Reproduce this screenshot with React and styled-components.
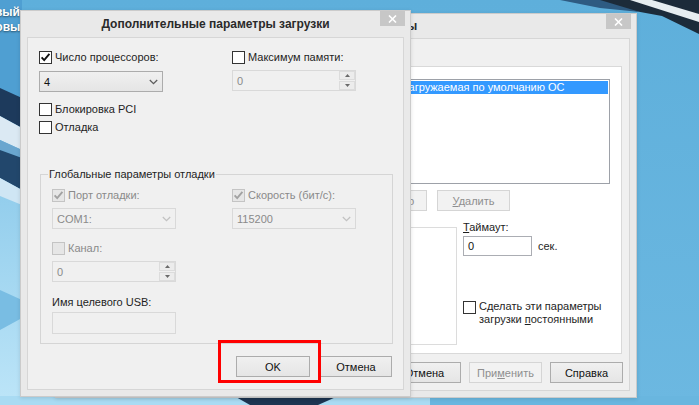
import React from 'react';
import styled, { createGlobalStyle } from 'styled-components';

const Global = createGlobalStyle`
  html, body { margin: 0; padding: 0; background: #69b5de; }
  body { font-family: "Liberation Sans", Arial, sans-serif; }
`;

const Desktop = styled.div`
  position: relative;
  width: 699px;
  height: 405px;
  overflow: hidden;
  font-family: "Liberation Sans", Arial, sans-serif;
  font-size: 11px;
  color: #1e1e1e;
`;

const Wallpaper = styled.svg`
  position: absolute;
  left: 0;
  top: 0;
`;

const IconLabel = styled.div`
  position: absolute;
  right: ${p => p.$right}px;
  top: ${p => p.$top}px;
  color: #fff;
  font-size: 12px;
  font-weight: bold;
  line-height: 15px;
  white-space: nowrap;
  text-shadow: 0 1px 2px rgba(0, 0, 0, 0.5);
`;

const Window = styled.div`
  position: absolute;
  z-index: ${p => p.$z};
  left: ${p => p.$x}px;
  top: ${p => p.$y}px;
  width: ${p => p.$w}px;
  height: ${p => p.$h}px;
  box-sizing: border-box;
  background: #e9e9e9;
  border: 1px solid #cbcbcb;
  box-shadow: 0 1px 4px rgba(0, 0, 0, 0.12);
  display: flex;
  flex-direction: column;
`;

const TitleBar = styled.div`
  height: ${p => p.$h}px;
  display: flex;
  align-items: flex-start;
  flex: none;
`;

const Title = styled.div`
  flex: 1;
  text-align: center;
  padding-left: ${p => p.$pad}px;
  line-height: ${p => p.$h}px;
  font-size: 12px;
  font-weight: bold;
  color: #2a2a2a;
  white-space: nowrap;
  overflow: hidden;
`;

const CloseBtn = styled.div`
  width: 25px;
  height: 15px;
  margin-right: 5px;
  background: #c7c7c7;
  display: flex;
  align-items: center;
  justify-content: center;
  flex: none;
`;

const Client = styled.div`
  position: relative;
  flex: 1;
  margin: 0 6px 6px;
  box-sizing: border-box;
  background: #f0f0f0;
  border: 1px solid #d6d6d6;
  display: flex;
  flex-direction: column;
  padding: ${p => p.$pad};
  & > * { flex-shrink: 0; }
`;

/* ---------- controls ---------- */

const Grid2 = styled.div`
  display: grid;
  grid-template-columns: 124px 124px;
  column-gap: ${p => p.$gap}px;
`;

const Field = styled.div`
  display: flex;
  flex-direction: column;
  gap: ${p => p.$gap}px;
`;

const CheckRow = styled.div`
  display: flex;
  align-items: ${p => (p.$top ? 'flex-start' : 'center')};
  gap: 3px;
  margin-top: ${p => p.$mt || 0}px;
`;

const Box = styled.div`
  width: 13px;
  height: 13px;
  box-sizing: border-box;
  flex: none;
  border: 1px solid ${p => (p.$disabled ? '#c4c4c4' : '#333333')};
  background: ${p => (p.$disabled ? '#e6e6e6' : '#ffffff')};
  display: flex;
  align-items: center;
  justify-content: center;
  margin-top: ${p => p.$mt || 0}px;
`;

const Label = styled.span`
  line-height: 13px;
  color: ${p => (p.$disabled ? '#8a8a8a' : '#1e1e1e')};
  white-space: nowrap;
`;

const Check = ({ checked, disabled, mt }) => (
  <Box $disabled={disabled} $mt={mt}>
    {checked && (
      <svg width="11" height="11" viewBox="0 0 11 11">
        <path
          d="M1.6 5.4 L4.2 8.1 L9.4 1.9"
          fill="none"
          stroke={disabled ? '#a2a2a2' : '#111'}
          strokeWidth="1.9"
        />
      </svg>
    )}
  </Box>
);

const SelectBox = styled.div`
  height: 21px;
  box-sizing: border-box;
  border: 1px solid ${p => (p.$disabled ? '#d9d9d9' : '#acacac')};
  background: ${p => (p.$disabled ? '#f0f0f0' : 'linear-gradient(#f0f0f0, #e5e5e5)')};
  color: ${p => (p.$disabled ? '#8a8a8a' : '#111')};
  display: flex;
  align-items: center;
  justify-content: space-between;
  padding: 0 4px 0 4px;
`;

const Chevron = ({ disabled }) => (
  <svg width="9" height="6" viewBox="0 0 9 6">
    <path d="M0.8 1 L4.5 4.6 L8.2 1" fill="none" stroke={disabled ? '#c2c2c2' : '#5c5c5c'} strokeWidth="1.3" />
  </svg>
);

const Select = ({ value, disabled }) => (
  <SelectBox $disabled={disabled}>
    <span>{value}</span>
    <Chevron disabled={disabled} />
  </SelectBox>
);

const SpinBox = styled.div`
  height: 21px;
  box-sizing: border-box;
  border: 1px solid #d9d9d9;
  background: #f0f0f0;
  display: flex;
`;

const SpinValue = styled.div`
  flex: 1;
  padding-left: 4px;
  display: flex;
  align-items: center;
  color: #8a8a8a;
`;

const SpinButtons = styled.div`
  width: 16px;
  display: flex;
  flex-direction: column;
  gap: 1px;
`;

const SpinArrow = styled.div`
  flex: 1;
  border: 1px solid #dcdcdc;
  background: #ececec;
  display: flex;
  align-items: center;
  justify-content: center;
`;

const Spin = ({ value }) => (
  <SpinBox>
    <SpinValue>{value}</SpinValue>
    <SpinButtons>
      <SpinArrow>
        <svg width="5" height="3" viewBox="0 0 5 3"><path d="M0 3 L2.5 0 L5 3 Z" fill="#6a6a6a" /></svg>
      </SpinArrow>
      <SpinArrow>
        <svg width="5" height="3" viewBox="0 0 5 3"><path d="M0 0 L2.5 3 L5 0 Z" fill="#6a6a6a" /></svg>
      </SpinArrow>
    </SpinButtons>
  </SpinBox>
);

const TextInput = styled.div`
  width: ${p => (p.$w ? `${p.$w}px` : 'auto')};
  height: ${p => p.$h}px;
  box-sizing: border-box;
  border: 1px solid ${p => (p.$disabled ? '#d9d9d9' : '#abadb3')};
  background: ${p => (p.$disabled ? '#f0f0f0' : '#ffffff')};
  display: flex;
  align-items: center;
  padding-left: 4px;
  color: #111;
`;

const Button = styled.div`
  width: ${p => p.$w}px;
  height: 21px;
  box-sizing: border-box;
  flex: none;
  border: 1px solid ${p => (p.$disabled ? '#d5d5d5' : '#acacac')};
  background: ${p => (p.$disabled ? '#f2f2f2' : 'linear-gradient(#f0f0f0, #e5e5e5)')};
  color: ${p => (p.$disabled ? '#8f8f8f' : '#111')};
  display: flex;
  align-items: center;
  justify-content: center;
  white-space: nowrap;
`;

/* ---------- front dialog layout ---------- */

const Options = styled.div`
  display: flex;
  flex-direction: column;
  gap: 5px;
  margin-top: 11px;
`;

const Group = styled.div`
  position: relative;
  margin: 40px 0 0 1px;
  border: 1px solid #d5d5d5;
  padding: 14px 0 9px 11px;
  display: flex;
  flex-direction: column;
`;

const GroupTitle = styled.span`
  position: absolute;
  left: 7px;
  top: -7px;
  padding: 0 1px;
  line-height: 13px;
  background: #f0f0f0;
  color: #1e1e1e;
  white-space: nowrap;
`;

const PlainLabel = styled.div`
  line-height: 13px;
  margin-top: ${p => p.$mt || 0}px;
  color: #1e1e1e;
  white-space: nowrap;
`;

const Column = styled.div`
  display: flex;
  flex-direction: column;
  width: ${p => (p.$w ? `${p.$w}px` : 'auto')};
  gap: ${p => p.$gap || 0}px;
  margin-top: ${p => p.$mt || 0}px;
`;

const ButtonRow = styled.div`
  display: flex;
  justify-content: ${p => p.$justify || 'flex-end'};
  gap: ${p => p.$gap}px;
  margin-top: ${p => p.$mt}px;
  padding-right: ${p => p.$pr || 0}px;
`;

const Highlight = styled.div`
  position: absolute;
  left: 190px;
  top: 302px;
  width: 103px;
  height: 43px;
  box-sizing: border-box;
  border: 3px solid #ff0000;
`;

/* ---------- back window layout ---------- */

const TabStrip = styled.div`
  height: 27px;
  display: flex;
  align-items: flex-end;
  padding-left: 7px;
`;

const Tab = styled.div`
  width: ${p => p.$w}px;
  height: ${p => (p.$active ? 23 : 20)}px;
  box-sizing: border-box;
  border: 1px solid #d9d9d9;
  border-bottom: none;
  margin-right: -1px;
  background: ${p => (p.$active ? '#ffffff' : '#f0f0f0')};
  position: relative;
  z-index: ${p => (p.$active ? 1 : 0)};
  margin-bottom: ${p => (p.$active ? -1 : 0)}px;
`;

const TabPage = styled.div`
  height: 288px;
  margin: 0 7px 0 5px;
  box-sizing: border-box;
  background: #ffffff;
  border: 1px solid #d9d9d9;
  padding: 12px 11px 0;
  display: flex;
  flex-direction: column;
  & > * { flex-shrink: 0; }
`;

const ListBox = styled.div`
  height: 105px;
  box-sizing: border-box;
  border: 1px solid #9da1a8;
  padding: 1px;
  background: #fff;
  overflow: hidden;
`;

const ListItem = styled.div`
  height: 13px;
  line-height: 13px;
  background: #3399ff;
  color: #ffffff;
  white-space: nowrap;
  padding-left: ${p => p.$indent}px;
`;

const LowerRow = styled.div`
  display: flex;
  gap: 6px;
  margin-top: 10px;
`;

const BootGroup = styled.div`
  width: 377px;
  height: 118px;
  box-sizing: border-box;
  margin-top: 6px;
  border: 1px solid #dcdcdc;
  flex: none;
`;

const InlineRow = styled.div`
  display: flex;
  align-items: center;
  gap: 6px;
  margin-top: 2px;
`;

const CloseIcon = () => (
  <svg width="9" height="8" viewBox="0 0 9 8">
    <path d="M1 0.5 L8 7.5 M8 0.5 L1 7.5" stroke="#ffffff" strokeWidth="1.6" />
  </svg>
);

export default function App() {
  return (
    <Desktop>
      <Global />
      <Wallpaper width="699" height="405" viewBox="0 0 699 405">
        <defs>
          <linearGradient id="lowLeft" x1="0" y1="0" x2="0" y2="1">
            <stop offset="0" stopColor="#8ecbeb" />
            <stop offset="1" stopColor="#bde5f8" />
          </linearGradient>
          <linearGradient id="rightBlue" x1="0" y1="0" x2="0" y2="1">
            <stop offset="0" stopColor="#5eafdb" />
            <stop offset="1" stopColor="#6cb8e1" />
          </linearGradient>
        </defs>
        <rect x="0" y="0" width="699" height="405" fill="url(#rightBlue)" />
        <rect x="0" y="0" width="22" height="100" fill="#4f9fd2" />
        <rect x="0" y="170" width="22" height="235" fill="url(#lowLeft)" />
        <polygon points="0,88 22,98 22,128 0,116" fill="#1d3a5c" />
        <polygon points="0,116 22,128 22,150 0,140" fill="#dbe9f3" />
        <polygon points="0,140 22,150 22,158 0,150" fill="#6aa6cf" />
        <polygon points="0,150 22,158 22,190 0,178" fill="#22476c" />
        <polygon points="0,178 22,190 22,205 0,196" fill="#cfe6f4" />
        <polygon points="0,290 22,300 22,318 0,330" fill="#79bde3" />
        <rect x="0" y="396" width="699" height="9" fill="#a9dbf3" />
        <polygon points="236,397 336,397 318,405 250,405" fill="#1d3552" />
        <rect x="430" y="396" width="269" height="9" fill="#69b6df" />
        <polygon points="575,0 699,0 699,34 662,16" fill="#1c2b3a" />
        <polygon points="630,0 652,0 699,14 699,22" fill="#e6edf1" />
        <polygon points="560,0 600,0 640,12 600,8" fill="#2e5b82" />
      </Wallpaper>

      <IconLabel $right={679} $top={5}>Новый</IconLabel>
      <IconLabel $right={672} $top={20}>Готовые</IconLabel>

      {/* background window: msconfig (mostly covered) */}
      <Window $z={1} $x={55} $y={13} $w={582} $h={385}>
        <TitleBar $h={24}>
          <Title $h={24} $pad={30}>Конфигурация системы</Title>
          <CloseBtn><CloseIcon /></CloseBtn>
        </TitleBar>
        <Client $pad="0">
          <TabStrip>
            <Tab $w={50} />
            <Tab $w={64} $active />
            <Tab $w={56} />
            <Tab $w={86} />
            <Tab $w={56} />
          </TabStrip>
          <TabPage>
            <ListBox>
              <ListItem $indent={120}>
                Windows 8 (C:\Windows) : Текущая ОС; загружаемая по умолчанию ОС
              </ListItem>
            </ListBox>
            <ButtonRow $justify="flex-start" $gap={10} $mt={6}>
              <Button $w={165} $disabled />
              <Button $w={172} $disabled>Использовать по умолчанию</Button>
              <Button $w={73} $disabled><span><u>У</u>далить</span></Button>
            </ButtonRow>
            <LowerRow>
              <BootGroup />
              <Column>
                <PlainLabel><u>Т</u>аймаут:</PlainLabel>
                <InlineRow>
                  <TextInput $w={69} $h={20}>0</TextInput>
                  <span>сек.</span>
                </InlineRow>
                <CheckRow $top $mt={44}>
                  <Check mt={1} />
                  <Label>
                    Сделать эти параметры<br />загрузки <u>п</u>остоянными
                  </Label>
                </CheckRow>
              </Column>
            </LowerRow>
          </TabPage>
          <ButtonRow $gap={8} $mt={8} $pr={6}>
            <Button $w={73} />
            <Button $w={73}>Отмена</Button>
            <Button $w={73} $disabled><span>При<u>м</u>енить</span></Button>
            <Button $w={73}>Справка</Button>
          </ButtonRow>
        </Client>
      </Window>

      {/* foreground dialog */}
      <Window $z={2} $x={20} $y={10} $w={391} $h={387}>
        <TitleBar $h={26}>
          <Title $h={26} $pad={30}>Дополнительные параметры загрузки</Title>
          <CloseBtn><CloseIcon /></CloseBtn>
        </TitleBar>
        <Client $pad="13px 10px 0 11px">
          <Grid2 $gap={69}>
            <Field $gap={7}>
              <CheckRow><Check checked /><Label>Число процессоров:</Label></CheckRow>
              <Select value="4" />
            </Field>
            <Field $gap={6}>
              <CheckRow><Check /><Label>Максимум памяти:</Label></CheckRow>
              <Spin value="0" />
            </Field>
          </Grid2>
          <Options>
            <CheckRow><Check /><Label>Блокировка PCI</Label></CheckRow>
            <CheckRow><Check /><Label>Отладка</Label></CheckRow>
          </Options>
          <Group>
            <GroupTitle>Глобальные параметры отладки</GroupTitle>
            <Grid2 $gap={56}>
              <Field $gap={6}>
                <CheckRow><Check checked disabled /><Label $disabled>Порт отладки:</Label></CheckRow>
                <Select value="COM1:" disabled />
              </Field>
              <Field $gap={6}>
                <CheckRow><Check checked disabled /><Label $disabled>Скорость (бит/с):</Label></CheckRow>
                <Select value="115200" disabled />
              </Field>
            </Grid2>
            <Column $w={124} $gap={6} $mt={13}>
              <CheckRow><Check disabled /><Label $disabled>Канал:</Label></CheckRow>
              <Spin value="0" />
            </Column>
            <Column $w={124} $gap={3} $mt={14}>
              <PlainLabel>Имя целевого USB:</PlainLabel>
              <TextInput $w={124} $h={22} $disabled />
            </Column>
          </Group>
          <ButtonRow $gap={10} $mt={12} $pr={1}>
            <Button $w={74}>OK</Button>
            <Button $w={72}>Отмена</Button>
          </ButtonRow>
          <Highlight />
        </Client>
      </Window>
    </Desktop>
  );
}
